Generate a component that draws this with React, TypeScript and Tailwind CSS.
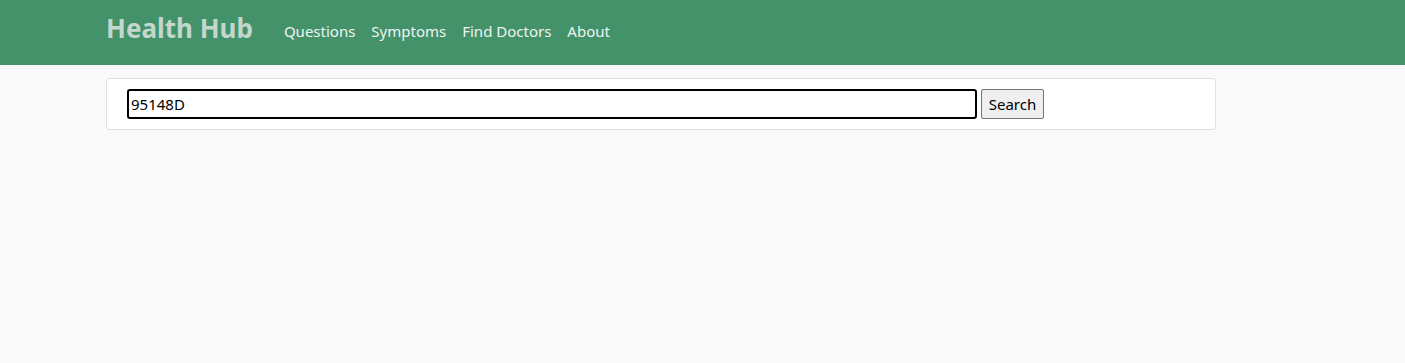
import React from 'react';

const navLinks = ['Questions', 'Symptoms', 'Find Doctors', 'About'];

export default function App() {
  return (
    <div
      className="min-h-[363px] bg-[#f9f9f9]"
      style={{ fontFamily: '"Noto Sans", "Open Sans", sans-serif' }}
    >
      {/* Header */}
      <header className="h-[65px] bg-[#44926a]">
        <div className="ml-[106px] flex h-full w-[1110px] items-center">
          <span className="text-[26px] font-bold leading-none text-[#c3d7cd] pb-[10px]">Health Hub</span>
          <nav className="ml-[31px] flex gap-[16px] pb-[2px]">
            {navLinks.map((link) => (
              <a key={link} href="#" className="text-[15px] text-[#eef5f1]">
                {link}
              </a>
            ))}
          </nav>
        </div>
      </header>

      {/* Search card */}
      <div className="ml-[106px] mt-[13px] w-[1110px]">
        <div className="flex h-[52px] items-center gap-[4px] rounded-[3px] border border-[#dee2e6] bg-white pl-[20px]">
          <input
            defaultValue="95148D"
            className="h-[30px] w-[850px] rounded-[3px] border-2 border-black px-[2px] text-[15px] text-black outline-none"
          />
          <button className="h-[30px] w-[63px] rounded-[2px] border border-[#767676] bg-[#efefef] text-[15px] text-black">
            Search
          </button>
        </div>
      </div>
    </div>
  );
}
